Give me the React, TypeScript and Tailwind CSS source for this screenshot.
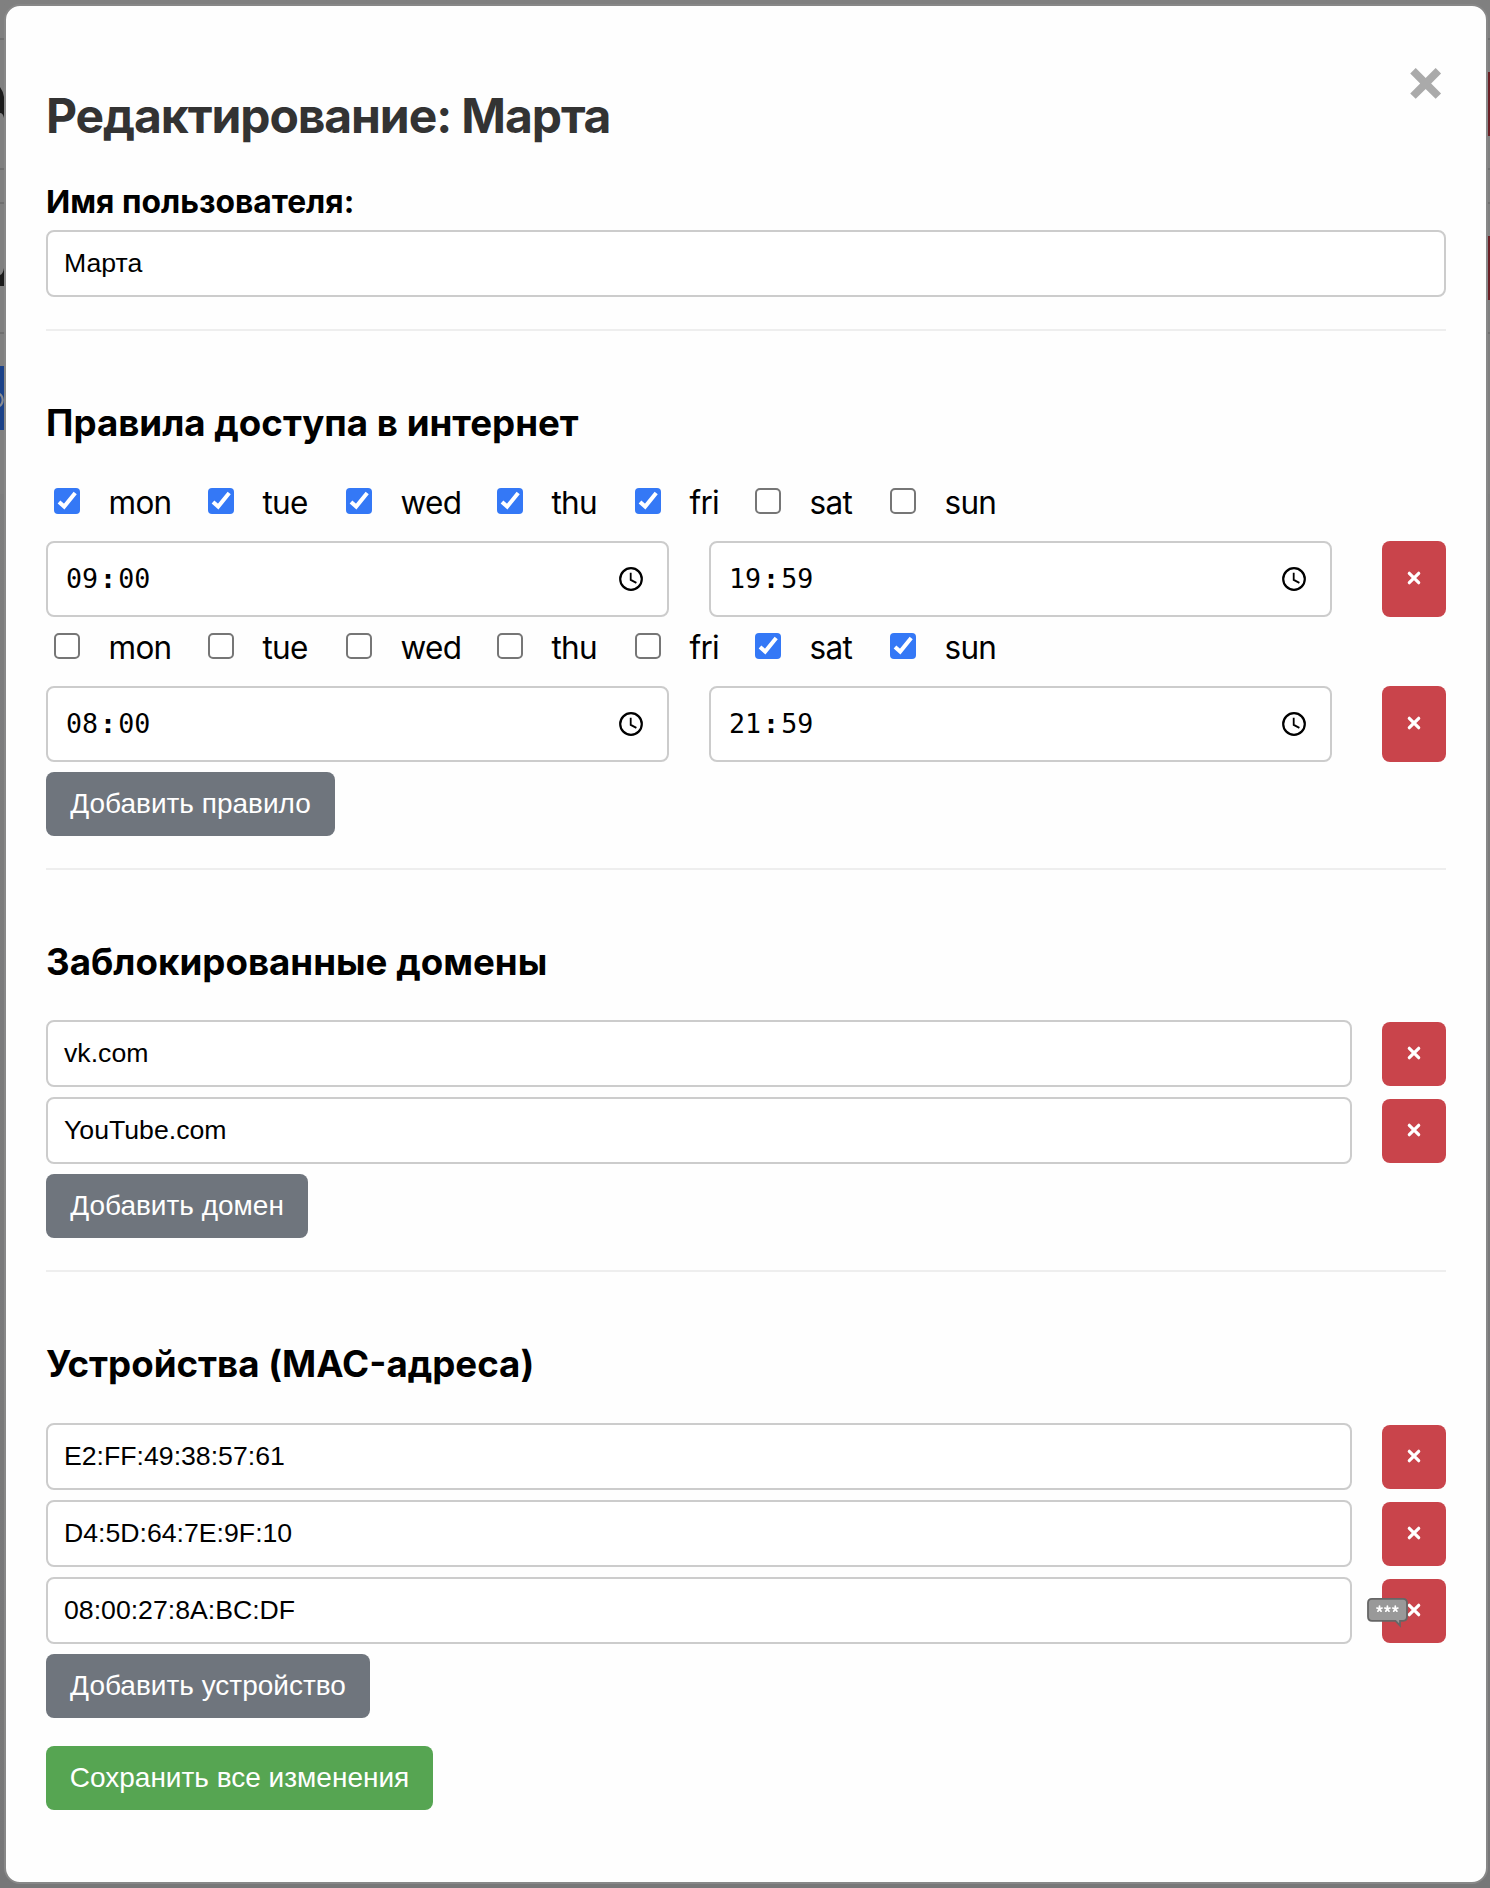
import React from "react";

const DAYS = ["mon", "tue", "wed", "thu", "fri", "sat", "sun"];
const DAY_WIDTHS = ["w-[154px]", "w-[138px]", "w-[151px]", "w-[138px]", "w-[120px]", "w-[135px]", "w-[120px]"];

function Checkbox({ checked }: { checked: boolean }) {
  return checked ? (
    <span className="block size-[26px] rounded-[4px] bg-[#3478f6]">
      <svg viewBox="0 0 26 26" className="size-[26px]" fill="none" stroke="#fff" strokeWidth="4">
        <path d="M5 14 L10.2 18.6 L21.2 5" />
      </svg>
    </span>
  ) : (
    <span className="block size-[26px] rounded-[5px] border-2 border-[#767676] bg-white" />
  );
}

function DayRow({ active }: { active: string[] }) {
  return (
    <div className="flex pl-2">
      {DAYS.map((d, i) => (
        <label key={d} className={`flex shrink-0 items-center gap-[28.5px] ${DAY_WIDTHS[i]}`}>
          <Checkbox checked={active.includes(d)} />
          <span className="pt-1 font-['Inter'] text-[31.5px] leading-[34px] tracking-[-0.7px]">{d}</span>
        </label>
      ))}
    </div>
  );
}

function DeleteButton({ children }: { children?: React.ReactNode }) {
  return (
    <button className="relative flex min-h-16 w-16 shrink-0 items-center justify-center rounded-lg bg-[#c9444b] pb-0.5">
      <svg viewBox="0 0 12 12" className="size-3 overflow-visible" stroke="#fff" strokeWidth="3.2" strokeLinecap="round">
        <path d="M1.3 1.3 L10.7 10.7 M10.7 1.3 L1.3 10.7" />
      </svg>
      {children}
    </button>
  );
}

function TimeField({ value }: { value: string }) {
  const [h, m] = value.split(":");
  return (
    <div className="flex h-[76px] w-[623px] items-center justify-between rounded-lg border-2 border-[#ccc] bg-white pr-6 pl-[18px]">
      <span className="font-['DejaVu_Sans_Mono',monospace] text-[26.67px] leading-8">
        {h}
        <span className="px-0.5 font-bold">:</span>
        {m}
      </span>
      <svg viewBox="0 0 24 24" className="size-6" fill="none" stroke="#000">
        <circle cx="12" cy="12" r="10.8" strokeWidth="2.2" />
        <path d="M11.7 5.8 V12.9 L17.4 15.9" strokeWidth="1.8" />
      </svg>
    </div>
  );
}

function TextField({ value }: { value: string }) {
  return (
    <div className="flex h-[67px] flex-1 items-center rounded-lg border-2 border-[#ccc] bg-white px-4 pb-0.5 text-[26.67px]">
      {value}
    </div>
  );
}

function FieldRow({ value, children }: { value: string; children?: React.ReactNode }) {
  return (
    <div className="flex items-end gap-[30px]">
      <TextField value={value} />
      <div className="flex pb-px">
        <DeleteButton>{children}</DeleteButton>
      </div>
    </div>
  );
}

function Rule({ days, from, to }: { days: string[]; from: string; to: string }) {
  return (
    <div className="flex flex-col gap-[21px]">
      <DayRow active={days} />
      <div className="flex justify-between">
        <div className="flex gap-10">
          <TimeField value={from} />
          <TimeField value={to} />
        </div>
        <DeleteButton />
      </div>
    </div>
  );
}

function Section({ title, gap, children }: { title: string; gap: string; children: React.ReactNode }) {
  return (
    <section className={`flex flex-col border-t-2 border-[#eee] pt-[67px] pb-8 ${gap}`}>
      <h3 className="font-['Inter'] text-[36.7px] leading-[50px] font-bold whitespace-nowrap">{title}</h3>
      <div className="flex flex-col gap-2.5">{children}</div>
    </section>
  );
}

function ActionButton({ children, className }: { children: React.ReactNode; className: string }) {
  return (
    <button className={`flex h-16 items-center justify-center rounded-lg pb-px text-[28px] whitespace-nowrap text-white ${className}`}>
      {children}
    </button>
  );
}

function MaskBubble() {
  return (
    <svg viewBox="0 0 42 32" className="absolute top-[17px] left-[-15px] h-8 w-[42px]">
      <path
        d="M5 2.8 H36 Q40 2.8 40 6.8 V20.8 Q40 24.8 36 24.8 H33 V29.5 L28.5 24.8 H5 Q1 24.8 1 20.8 V6.8 Q1 2.8 5 2.8 Z"
        fill="#999"
        stroke="#666"
        strokeWidth="1.8"
      />
      <g stroke="#fff" strokeWidth="1.7" strokeLinecap="round">
        {[12.5, 20.4, 28.3].map((x) => (
          <path key={x} d={`M${x} 10 V12.9 M${x} 12.9 L${x - 2.6} 12 M${x} 12.9 L${x + 2.6} 12 M${x} 12.9 L${x - 1.6} 15.2 M${x} 12.9 L${x + 1.6} 15.2`} />
        ))}
      </g>
    </svg>
  );
}

function Line() {
  return <div className="h-0.5 shrink-0 bg-[#707070]" />;
}

/* Slivers of the dimmed page that stay visible beside the dialog. */
function LeftEdge() {
  return (
    <div className="flex h-[494px] w-1 shrink-0 flex-col bg-[#808080] pt-[38px]">
      <Line />
      <svg viewBox="0 0 4 128" className="h-32 w-1" fill="#1a1a1a">
        <path d="M0 47 Q3 51 4 57 V78 Q3 73 0 73 Z" />
      </svg>
      <Line />
      <div className="h-8" />
      <Line />
      <svg viewBox="0 0 4 128" className="h-32 w-1" fill="#1a1a1a">
        <path d="M4 64 Q3 70 0 71 V82 H4 Z" />
      </svg>
      <Line />
      <div className="h-8" />
      <svg viewBox="0 0 4 64" className="h-16 w-1 bg-[#1b4289]" fill="none" stroke="#8a8d92">
        <ellipse cx="-2.5" cy="34" rx="5.2" ry="6.5" strokeWidth="2.2" />
      </svg>
    </div>
  );
}

function RightEdge() {
  return (
    <div className="flex h-[494px] w-0.5 shrink-0 flex-col bg-[#808080] pt-[38px]">
      <Line />
      <div className="h-8" />
      <div className="h-16 bg-[#6b1e24]" />
      <div className="h-8" />
      <Line />
      <div className="h-8" />
      <Line />
      <div className="h-8" />
      <div className="h-16 bg-[#6b1e24]" />
      <div className="h-8" />
      <Line />
    </div>
  );
}

export default function App() {
  return (
    <div className="flex h-[1888px] w-[1490px] items-start overflow-hidden bg-linear-to-b from-[#808080] to-[#777778] font-['Liberation_Sans',Arial,sans-serif] text-black">
      <LeftEdge />
      <main className="mt-1 h-[1880px] w-[1484px] rounded-2xl border-2 border-[#888] bg-[#fefefe] px-10 pt-[43px]">
        <header className="flex items-start justify-between">
          <h2 className="pt-[37px] font-['Inter'] text-[48px] leading-[60px] font-bold tracking-[-1.1px] whitespace-nowrap text-[#333]">
            Редактирование: Марта
          </h2>
          <button className="font-['Inter'] text-[60px] leading-[60px] font-bold text-[#aaa]">×</button>
        </header>
        <div className="flex flex-col gap-2 pt-9 pb-8">
          <div className="font-['Inter'] text-[31.8px] leading-[40px] font-bold whitespace-nowrap">Имя пользователя:</div>
          <div className="flex">
            <TextField value="Марта" />
          </div>
        </div>

        <Section title="Правила доступа в интернет" gap="gap-[34px]">
          <Rule days={["mon", "tue", "wed", "thu", "fri"]} from="09:00" to="19:59" />
          <Rule days={["sat", "sun"]} from="08:00" to="21:59" />
          <ActionButton className="w-[289px] bg-[#6f757d]">Добавить правило</ActionButton>
        </Section>

        <Section title="Заблокированные домены" gap="gap-[33px]">
          <FieldRow value="vk.com" />
          <FieldRow value="YouTube.com" />
          <ActionButton className="w-[262px] bg-[#6f757d]">Добавить домен</ActionButton>
        </Section>

        <Section title="Устройства (MAC-адреса)" gap="gap-[34px]">
          <FieldRow value="E2:FF:49:38:57:61" />
          <FieldRow value="D4:5D:64:7E:9F:10" />
          <FieldRow value="08:00:27:8A:BC:DF">
            <MaskBubble />
          </FieldRow>
          <ActionButton className="w-[324px] bg-[#6f757d]">Добавить устройство</ActionButton>
          <ActionButton className="mt-[18px] w-[387px] bg-[#56a552]">Сохранить все изменения</ActionButton>
        </Section>
      </main>
      <RightEdge />
    </div>
  );
}
